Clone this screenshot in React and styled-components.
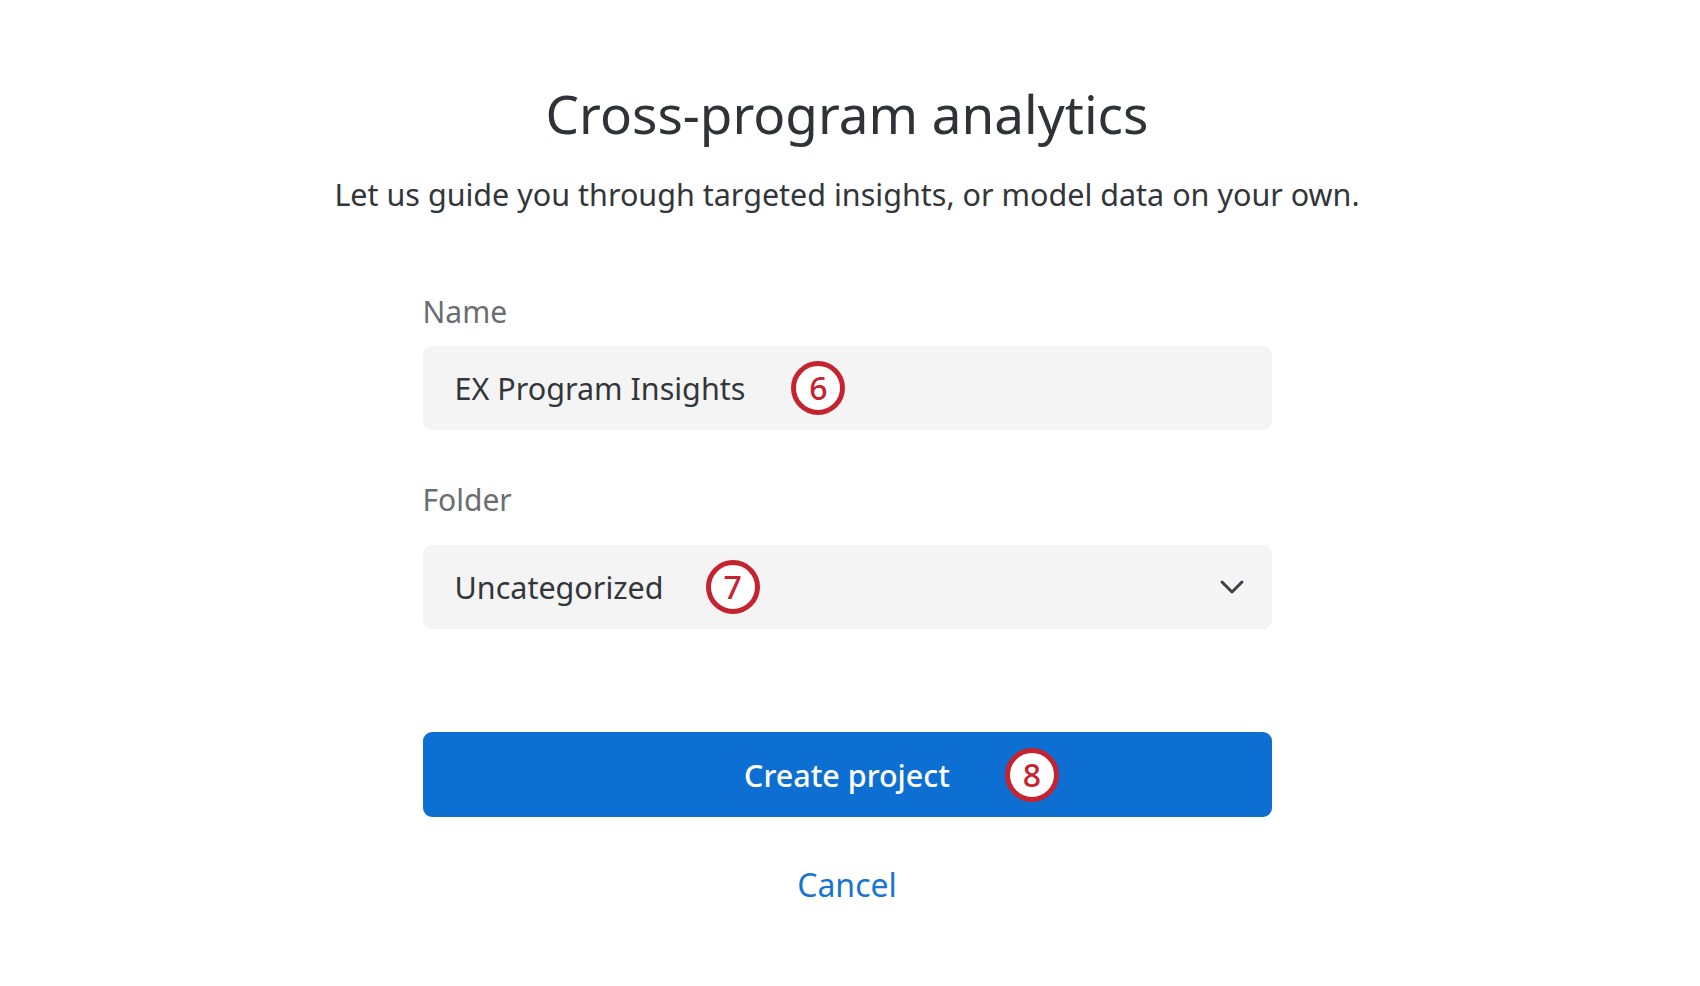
import styled, { createGlobalStyle } from "styled-components";

const GlobalStyle = createGlobalStyle`
  html, body {
    margin: 0;
    padding: 0;
    background: #fff;
  }
  body {
    font-family: "Noto Sans", "Open Sans", "Liberation Sans", sans-serif;
  }
`;

const Page = styled.main`
  display: flex;
  flex-direction: column;
  align-items: center;
  padding: 82px 6px 0 0;
  min-height: 986px;
  box-sizing: border-box;
`;

const Title = styled.h1`
  margin: 0;
  font-size: 53px;
  line-height: 64px;
  font-weight: 400;
  color: #2f3237;
`;

const Subtitle = styled.p`
  margin: 28px 0 0;
  font-size: 30.5px;
  line-height: 40px;
  color: #32363a;
`;

const Form = styled.form`
  width: 849px;
  margin-top: 78px;
  display: flex;
  flex-direction: column;
`;

const Field = styled.div`
  display: flex;
  flex-direction: column;
  gap: ${(p) => p.$gap}px;
  margin-top: ${(p) => p.$top}px;
`;

const Label = styled.label`
  font-size: 30px;
  line-height: 40px;
  color: #6a6d72;
`;

const Control = styled.div`
  position: relative;
  display: flex;
  align-items: center;
  height: 84px;
  padding: 0 32px;
  background: #f4f4f4;
  border-radius: 9px;
  font-size: 30.5px;
  color: #32363a;
`;

const Chevron = styled.svg`
  margin-left: auto;
  margin-right: -5px;
  width: 26px;
  height: 16px;
`;

const Badge = styled.span`
  display: inline-flex;
  align-items: center;
  justify-content: center;
  box-sizing: border-box;
  width: 54px;
  height: 54px;
  margin-left: ${(p) => p.$gap || 44}px;
  border: 5px solid #c4232f;
  border-radius: 50%;
  background: #fff;
  color: #c4232f;
  font-size: 32px;
  line-height: 1;
  font-weight: 500;
`;

const ButtonBadge = styled(Badge)`
  position: absolute;
  left: calc(50% + 158px);
  top: 50%;
  margin: 0;
  transform: translateY(-50%);
`;

const PrimaryButton = styled.button`
  position: relative;
  margin-top: 103px;
  height: 85px;
  border: none;
  border-radius: 9px;
  background: #0d6fd1;
  color: #fff;
  font-family: inherit;
  font-size: 30.5px;
  font-weight: 500;
  cursor: pointer;
`;

const CancelLink = styled.a`
  align-self: center;
  margin-top: 48px;
  font-size: 32px;
  line-height: 40px;
  color: #1874d2;
  text-decoration: none;
  cursor: pointer;
`;

export default function App() {
  return (
    <>
      <GlobalStyle />
      <Page>
        <Title>Cross-program analytics</Title>
        <Subtitle>
          Let us guide you through targeted insights, or model data on your own.
        </Subtitle>
        <Form onSubmit={(e) => e.preventDefault()}>
          <Field $gap={14} $top={0}>
            <Label>Name</Label>
            <Control>
              EX Program Insights
              <Badge $gap={46}>6</Badge>
            </Control>
          </Field>
          <Field $gap={25} $top={50}>
            <Label>Folder</Label>
            <Control>
              Uncategorized
              <Badge $gap={42}>7</Badge>
              <Chevron viewBox="0 0 26 16" fill="none">
                <polyline
                  points="3,3 13,13 23,3"
                  stroke="#3e4145"
                  strokeWidth="3"
                  strokeLinecap="round"
                  strokeLinejoin="round"
                />
              </Chevron>
            </Control>
          </Field>
          <PrimaryButton type="button">
            Create project
            <ButtonBadge>8</ButtonBadge>
          </PrimaryButton>
          <CancelLink>Cancel</CancelLink>
        </Form>
      </Page>
    </>
  );
}
